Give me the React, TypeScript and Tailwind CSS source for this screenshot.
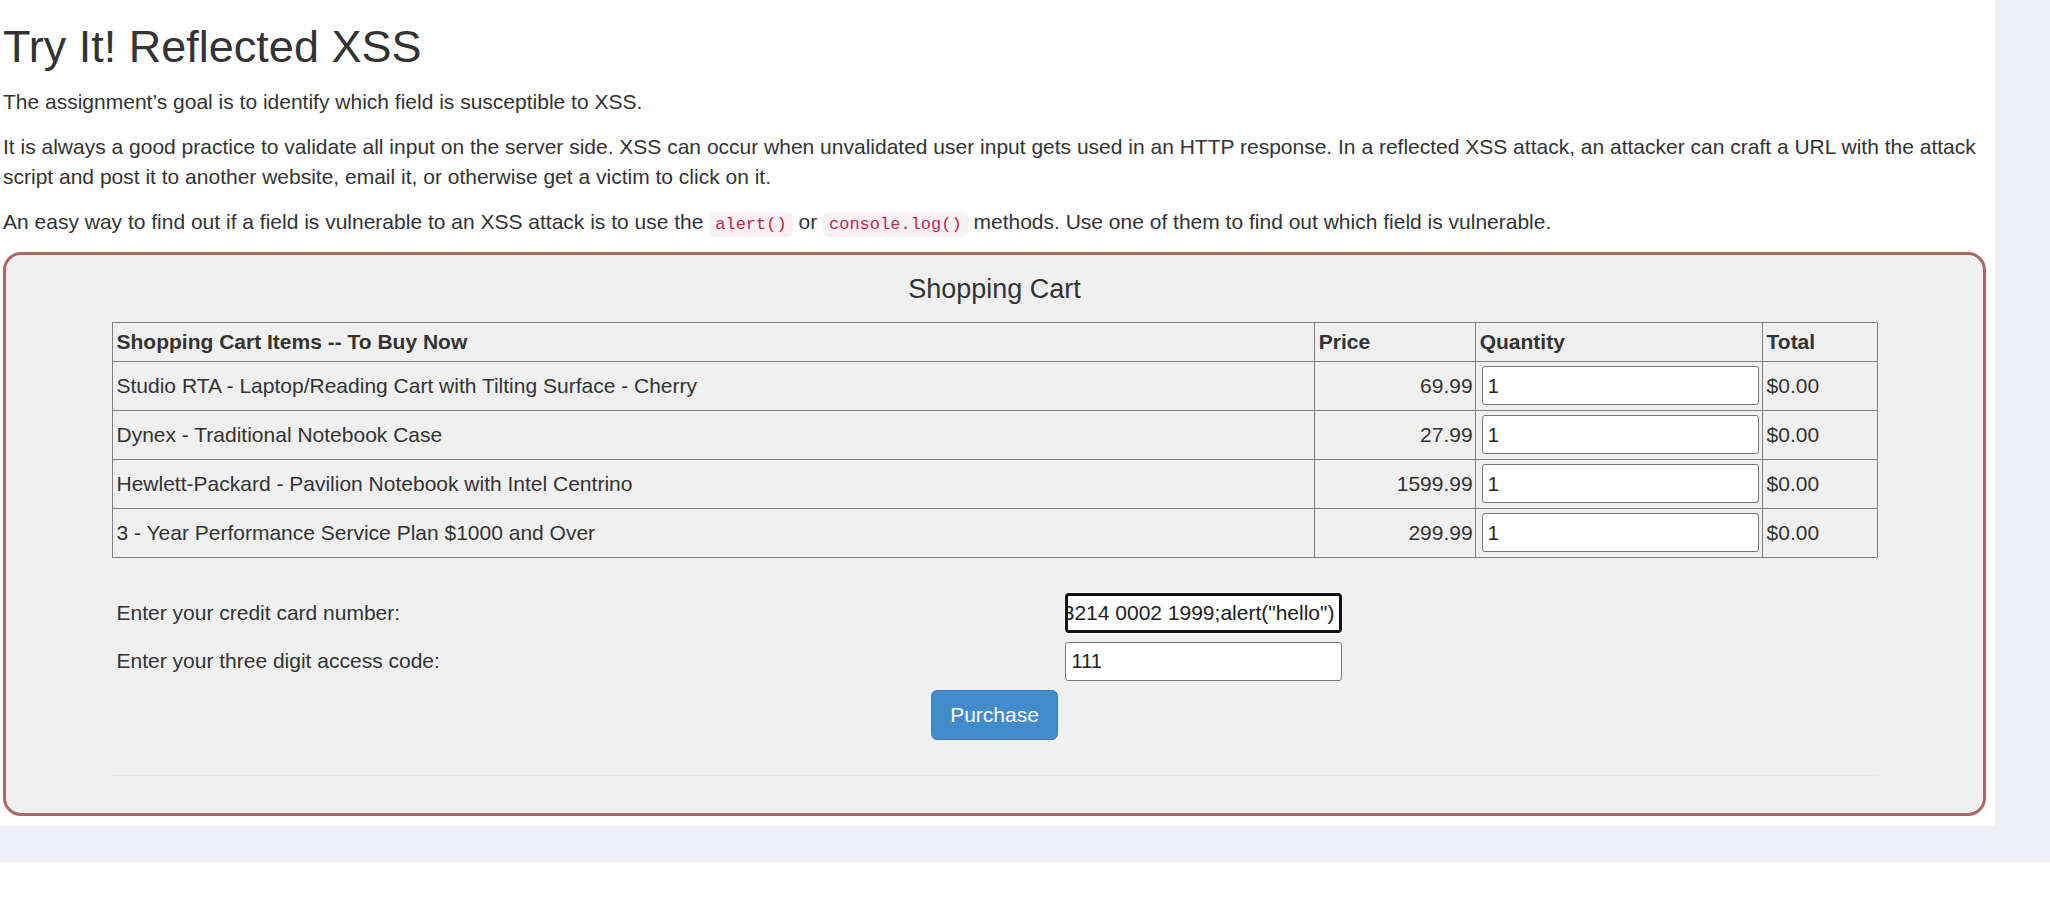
const ITEMS = [
  { name: "Studio RTA - Laptop/Reading Cart with Tilting Surface - Cherry", price: "69.99" },
  { name: "Dynex - Traditional Notebook Case", price: "27.99" },
  { name: "Hewlett-Packard - Pavilion Notebook with Intel Centrino", price: "1599.99" },
  { name: "3 - Year Performance Service Plan $1000 and Over", price: "299.99" },
];

function Code({ children }: { children: React.ReactNode }) {
  return (
    <code className="rounded-[6px] bg-[#f9f2f4] px-[6px] py-[3px] font-['Liberation_Mono',monospace] text-[17px] text-[#c7254e]">
      {children}
    </code>
  );
}

function ShoppingCart() {
  return (
    <div className="rounded-[18px] border-[3px] border-[#ae6767] bg-[#f0f0f0] pt-[19px] pb-[37px]">
      <h4 className="text-center text-[27px] leading-[30px] text-[#333]">Shopping Cart</h4>

      <table className="mx-auto mt-[18px] w-[1766px] border-collapse text-[21px] text-[#333]">
        <thead>
          <tr className="h-[39px]">
            <th className="w-[1203px] border border-[#808080] px-[4px] text-left font-bold">
              Shopping Cart Items -- To Buy Now
            </th>
            <th className="w-[161px] border border-[#808080] px-[4px] text-left font-bold">Price</th>
            <th className="w-[287px] border border-[#808080] px-[4px] text-left font-bold">Quantity</th>
            <th className="w-[115px] border border-[#808080] px-[4px] text-left font-bold">Total</th>
          </tr>
        </thead>
        <tbody>
          {ITEMS.map((item) => (
            <tr key={item.name} className="h-[49px]">
              <td className="border border-[#808080] px-[4px]">{item.name}</td>
              <td className="border border-[#808080] pr-[2px] text-right">{item.price}</td>
              <td className="border border-[#808080] pl-[6px] pr-[3px]">
                <div className="flex h-[39px] items-center rounded-[3px] border border-[#767676] bg-white pl-[5px] text-[20px] text-[#222]">
                  1
                </div>
              </td>
              <td className="border border-[#808080] px-[4px]">$0.00</td>
            </tr>
          ))}
        </tbody>
      </table>

      <div className="mx-auto mt-[35px] flex w-[1766px] flex-col gap-[9px] text-[21px] text-[#333]">
        <div className="flex items-center">
          <div className="w-[953px] pl-[5px]">Enter your credit card number:</div>
          <div className="flex h-[40px] w-[277px] items-center justify-end overflow-hidden whitespace-nowrap rounded-[4px] border-[3px] border-[#111] bg-white pr-[4px] text-[21px] text-[#222] ring-1 ring-white">
            4128 3214 0002 1999;alert("hello")
          </div>
        </div>
        <div className="flex items-center">
          <div className="w-[953px] pl-[5px]">Enter your three digit access code:</div>
          <div className="flex h-[39px] w-[277px] items-center rounded-[3px] border border-[#767676] bg-white pl-[6px] text-[20px] text-[#222]">
            111
          </div>
        </div>
      </div>

      <div className="mt-[9px] flex justify-center">
        <button className="h-[50px] rounded-[6px] border border-[#3a80bd] bg-[#428bca] px-[18px] text-[21px] text-white">
          Purchase
        </button>
      </div>

      <hr className="mx-auto mt-[35px] w-[1766px] border-t border-[#e8e8e8]" />
    </div>
  );
}

export default function App() {
  return (
    <div className="min-h-[862px] bg-[#eff0f5] font-['Liberation_Sans',Arial,sans-serif] text-[#333]">
      <div className="w-[1995px] rounded-br-[4px] bg-white pt-[22px] pr-[9px] pb-[10px] pl-[3px]">
        <h1 className="mb-[15px] text-[45px] leading-[1.1]">Try It! Reflected XSS</h1>
        <p className="mb-[15px] text-[21px] leading-[30px]">
          The assignment’s goal is to identify which field is susceptible to XSS.
        </p>
        <p className="mb-[15px] text-[21px] leading-[30px]">
          It is always a good practice to validate all input on the server side. XSS can occur when unvalidated user
          input gets used in an HTTP response. In a reflected XSS attack, an attacker can craft a URL with the attack
          script and post it to another website, email it, or otherwise get a victim to click on it.
        </p>
        <p className="mb-[12px] text-[21px] leading-[30px]">
          An easy way to find out if a field is vulnerable to an XSS attack is to use the <Code>alert()</Code> or{" "}
          <Code>console.log()</Code> methods. Use one of them to find out which field is vulnerable.
        </p>
        <ShoppingCart />
      </div>
    </div>
  );
}
